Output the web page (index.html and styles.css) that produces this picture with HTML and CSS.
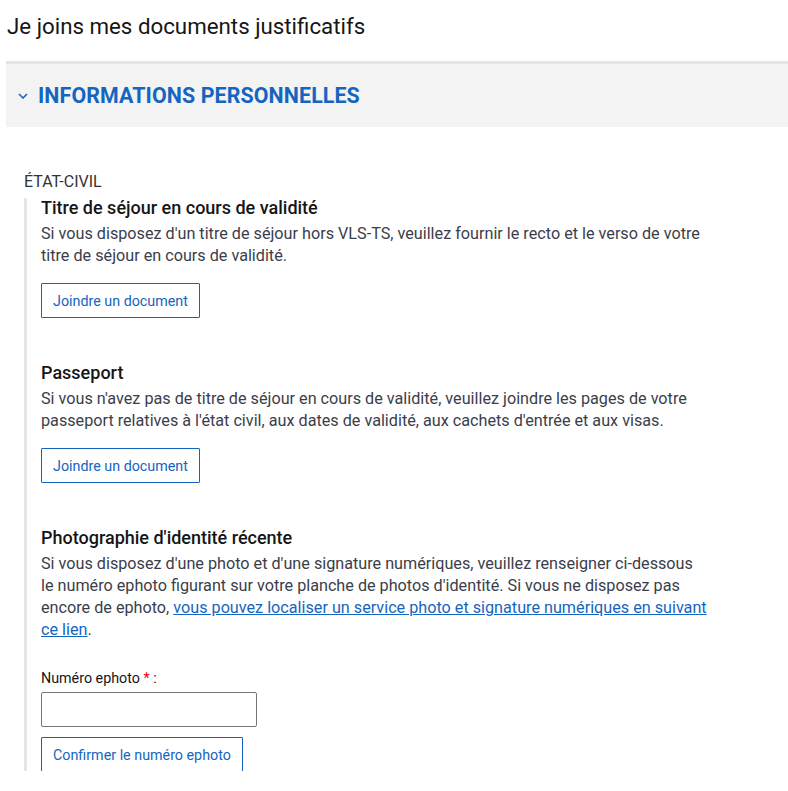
FILE: index.html
```html
<!DOCTYPE html>
<html lang="fr">
<head>
<meta charset="utf-8">
<title>Je joins mes documents justificatifs</title>
<link rel="stylesheet" href="styles.css">
</head>
<body>
<div class="page">
  <h1 class="title">Je joins mes documents justificatifs</h1>
  <div class="panel">
    <svg class="chevron" width="10" height="6" viewBox="0 0 10 6"><path d="M1 1l4 4 4-4" fill="none" stroke="#1565c0" stroke-width="1.6"/></svg>
    <h2 class="panel-title">INFORMATIONS PERSONNELLES</h2>
  </div>
  <div class="section">
    <div class="section-label">ÉTAT-CIVIL</div>
    <div class="group">
      <div class="item">
        <h3 class="item-title">Titre de séjour en cours de validité</h3>
        <p class="item-desc">Si vous disposez d'un titre de séjour hors VLS-TS, veuillez fournir le recto et le verso de votre titre de séjour en cours de validité.</p>
        <button class="btn">Joindre un document</button>
      </div>
      <div class="item">
        <h3 class="item-title">Passeport</h3>
        <p class="item-desc">Si vous n'avez pas de titre de séjour en cours de validité, veuillez joindre les pages de votre passeport relatives à l'état civil, aux dates de validité, aux cachets d'entrée et aux visas.</p>
        <button class="btn">Joindre un document</button>
      </div>
      <div class="item">
        <h3 class="item-title">Photographie d'identité récente</h3>
        <p class="item-desc">Si vous disposez d'une photo et d'une signature numériques, veuillez renseigner ci-dessous le numéro ephoto figurant sur votre planche de photos d'identité. Si vous ne disposez pas encore de ephoto, <a href="#" class="link">vous pouvez localiser un service photo et signature numériques en suivant ce lien</a>.</p>
        <label class="field-label" for="ephoto">Numéro ephoto <span class="req">*</span> :</label>
        <input class="field-input" id="ephoto" type="text">
        <button class="btn btn-confirm">Confirmer le numéro ephoto</button>
      </div>
    </div>
  </div>
</div>
</body>
</html>
```

FILE: styles.css
```css
html, body {
  margin: 0;
  padding: 0;
  background: #fff;
}
body {
  font-family: Roboto, "Noto Sans", sans-serif;
  color: #161616;
}
.page {
  box-sizing: border-box;
  height: 771px;
  overflow: hidden;
  padding: 13px 0 0 6px;
}
.title {
  margin: 0 0 22px 1px;
  font-size: 22.3px;
  line-height: 26px;
  font-weight: 400;
  color: #161616;
}
.panel {
  display: flex;
  align-items: center;
  height: 63px;
  border-top: 3px solid #e5e5e5;
  background: #f3f3f3;
  padding-left: 12px;
}
.chevron {
  display: block;
  margin-right: 10px;
}
.panel-title {
  margin: 0;
  font-size: 21.4px;
  font-weight: 700;
  color: #1565c0;
  letter-spacing: 0.1px;
}
.section {
  padding: 45px 0 0 18px;
}
.section-label {
  font-size: 16px;
  line-height: 20px;
  color: #333;
  margin-bottom: 6px;
}
.group {
  border-left: 3px solid #e5e5e5;
  padding-left: 14px;
  width: 667px;
}
.item {
  display: flex;
  flex-direction: column;
  align-items: flex-start;
  padding-bottom: 45px;
}
.item-title {
  margin: 0;
  font-size: 18px;
  line-height: 20px;
  font-weight: 500;
  color: #161616;
}
.item-desc {
  margin: 5px 0 16px;
  font-size: 16.2px;
  line-height: 22px;
  color: #3a3e4a;
}
.link {
  color: #1565c0;
  text-decoration: underline;
}
.btn {
  box-sizing: border-box;
  height: 35px;
  padding: 0 11px;
  border: 1px solid #1565c0;
  border-radius: 1px;
  background: #fff;
  color: #1565c0;
  font-family: Roboto, sans-serif;
  font-size: 14.3px;
}
.field-label {
  margin-top: 11px;
  font-size: 14.3px;
  line-height: 20px;
  color: #161616;
}
.req {
  color: #e1000f;
}
.field-input {
  box-sizing: border-box;
  width: 216px;
  height: 35px;
  margin: 4px 0 10px;
  border: 1px solid #767676;
  border-radius: 2px;
  font-family: Roboto, sans-serif;
  font-size: 14px;
}
```
